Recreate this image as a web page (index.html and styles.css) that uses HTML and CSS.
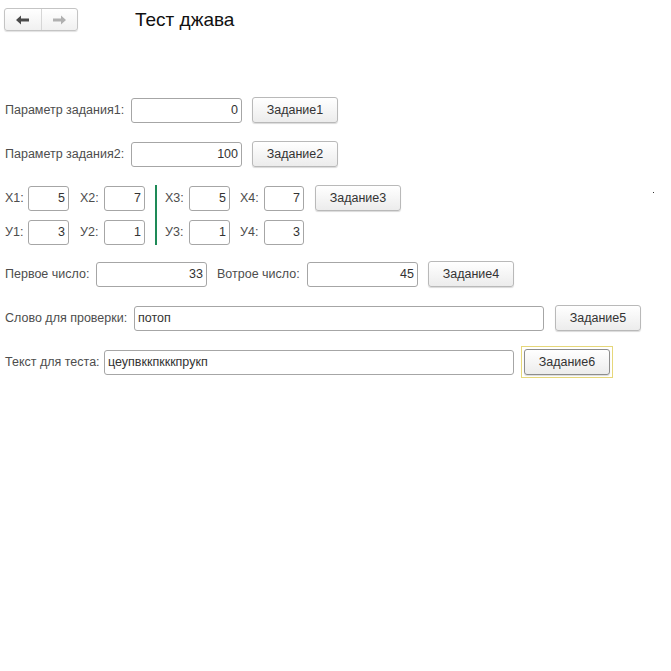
FILE: index.html
```html
<!DOCTYPE html>
<html>
<head>
<meta charset="utf-8">
<link rel="stylesheet" href="styles.css">
</head>
<body>
<div class="page">
  <div class="topbar">
    <div class="nav">
      <div class="nav-btn">
        <svg width="14" height="10" viewBox="0 0 14 10"><path d="M0 5 L5 0.5 L5 3.5 L13 3.5 L13 6.5 L5 6.5 L5 9.5 Z" fill="#4a4a4a"/></svg>
      </div>
      <div class="nav-btn">
        <svg width="14" height="10" viewBox="0 0 14 10"><path d="M14 5 L9 0.5 L9 3.5 L1 3.5 L1 6.5 L9 6.5 L9 9.5 Z" fill="#b0b0b0"/></svg>
      </div>
    </div>
    <div class="title">Тест джава</div>
  </div>

  <div class="form">
    <div class="row r1">
      <label class="lbl w126">Параметр задания1:</label>
      <div class="inp num w111">0</div>
      <button class="btn">Задание1</button>
    </div>
    <div class="row r2">
      <label class="lbl w126">Параметр задания2:</label>
      <div class="inp num w111">100</div>
      <button class="btn">Задание2</button>
    </div>

    <div class="xy">
      <div class="xy-col">
        <div class="row">
          <label class="lbl w23">X1:</label>
          <div class="inp num w41">5</div>
          <label class="lbl w24 ml11">X2:</label>
          <div class="inp num w41">7</div>
        </div>
        <div class="row rowy">
          <label class="lbl w23">У1:</label>
          <div class="inp num w41">3</div>
          <label class="lbl w24 ml11">У2:</label>
          <div class="inp num w41">1</div>
        </div>
      </div>
      <div class="vline"></div>
      <div class="xy-col">
        <div class="row">
          <label class="lbl w24">X3:</label>
          <div class="inp num w41">5</div>
          <label class="lbl w24 ml10">X4:</label>
          <div class="inp num w40">7</div>
          <button class="btn ml11">Задание3</button>
        </div>
        <div class="row rowy">
          <label class="lbl w24">У3:</label>
          <div class="inp num w41">1</div>
          <label class="lbl w24 ml10">У4:</label>
          <div class="inp num w40">3</div>
        </div>
      </div>
    </div>

    <div class="row r5">
      <label class="lbl w91">Первое число:</label>
      <div class="inp num w111">33</div>
      <label class="lbl w90 ml10">Вотрое число:</label>
      <div class="inp num w111">45</div>
      <button class="btn">Задание4</button>
    </div>

    <div class="row r6">
      <label class="lbl w129">Слово для проверки:</label>
      <div class="inp txt w410">потоп</div>
      <button class="btn ml11">Задание5</button>
    </div>

    <div class="row r7">
      <label class="lbl w99">Текст для теста:</label>
      <div class="inp txt w410">цеупвккпкккпрукп</div>
      <div class="focus-frame"><button class="btn focused">Задание6</button></div>
    </div>
  </div>
  <div class="dot"></div>
</div>
</body>
</html>
```

FILE: styles.css
```css
html, body {
  margin: 0;
  padding: 0;
  background: #ffffff;
}
body {
  font-family: "Liberation Sans", Arial, sans-serif;
  font-size: 12.5px;
  color: #4d4d4d;
}
.page {
  position: relative;
  width: 671px;
  height: 671px;
}
.topbar {
  display: flex;
  align-items: center;
  padding: 8px 0 0 4px;
  height: 23px;
}
.nav {
  display: flex;
  width: 72px;
  height: 21px;
  border: 1px solid #c4c4c4;
  border-radius: 3px;
  background: linear-gradient(#ffffff, #f0f0f0);
  box-shadow: 0 1px 1px rgba(0,0,0,0.12);
}
.nav-btn {
  flex: 1;
  display: flex;
  align-items: center;
  justify-content: center;
}
.nav-btn + .nav-btn {
  border-left: 1px solid #d6d6d6;
}
.title {
  margin-left: 57px;
  font-size: 19px;
  color: #111;
  margin-top: 0px;
}
.form {
  padding: 66px 0 0 5px;
}
.row {
  display: flex;
  align-items: center;
  height: 26px;
}
.r2 { margin-top: 18px; }
.xy {
  display: flex;
  margin-top: 18px;
}
.rowy { margin-top: 8px; }
.vline {
  width: 2px;
  background: #1e8a57;
  margin: 0 8px 0 10px;
}
.r5 { margin-top: 16px; }
.r6 { margin-top: 18px; }
.r7 { margin-top: 18px; }
.lbl {
  white-space: nowrap;
  flex: none;
}
.inp {
  box-sizing: border-box;
  height: 25px;
  border: 1px solid #a6a6a6;
  border-radius: 3px;
  color: #333;
  line-height: 23px;
  padding: 0 3px;
  white-space: nowrap;
  overflow: hidden;
  background: #fff;
  flex: none;
}
.num { text-align: right; }
.txt { text-align: left; }
.btn {
  box-sizing: border-box;
  width: 86px;
  height: 26px;
  margin-left: 10px;
  border: 1px solid #b9b9b9;
  border-radius: 3px;
  background: linear-gradient(#ffffff, #ececec);
  box-shadow: 0 1px 1px rgba(0,0,0,0.15);
  font-family: "Liberation Sans", Arial, sans-serif;
  font-size: 12.5px;
  color: #333;
  padding: 0;
  flex: none;
}
.focus-frame {
  margin-left: 7px;
  border: 1px solid #e6d77a;
  padding: 2px;
  height: 26px;
  display: flex;
}
.btn.focused {
  margin-left: 0;
  border-color: #8d8d8d;
}
.ml10 { margin-left: 10px; }
.ml11 { margin-left: 11px; }
.w23 { width: 23px; }
.w24 { width: 24px; }
.w40 { width: 40px; }
.w41 { width: 41px; }
.w90 { width: 90px; }
.w91 { width: 91px; }
.w99 { width: 99px; }
.w111 { width: 111px; }
.w126 { width: 126px; }
.w129 { width: 129px; }
.w410 { width: 410px; }
.dot {
  position: absolute;
  left: 653px;
  top: 192px;
  width: 1px;
  height: 1px;
  background: #333;
}
```
